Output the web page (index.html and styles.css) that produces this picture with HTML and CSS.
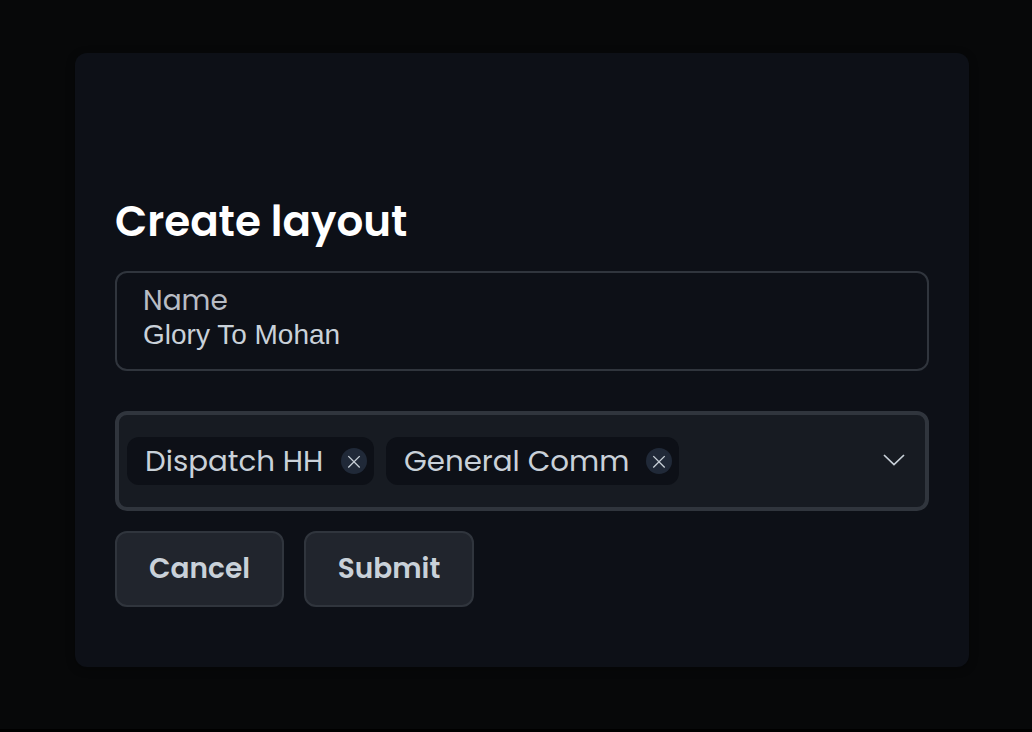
FILE: index.html
```html
<!DOCTYPE html>
<html lang="en">
<head>
<meta charset="utf-8">
<title>Create layout</title>
<link rel="stylesheet" href="styles.css">
</head>
<body>
<main class="card">
  <h1 class="title">Create layout</h1>
  <div class="field">
    <span class="label">Name</span>
    <span class="value">Glory To Mohan</span>
  </div>
  <div class="select">
    <div class="chip"><span class="chip-text">Dispatch HH</span>
      <svg class="remove" viewBox="0 0 26 26"><circle cx="13" cy="13" r="13"/><path d="M7.3 8.1 18.7 19.5M18.7 8.1 7.3 19.5"/></svg></div>
    <div class="chip wide"><span class="chip-text">General Comm</span>
      <svg class="remove" viewBox="0 0 26 26"><circle cx="13" cy="13" r="13"/><path d="M7.3 8.1 18.7 19.5M18.7 8.1 7.3 19.5"/></svg></div>
    <svg class="chevron" viewBox="0 0 24 14"><path d="M2 2 12 11.5 22 2"/></svg>
  </div>
  <div class="actions">
    <button class="button cancel">Cancel</button>
    <button class="button submit">Submit</button>
  </div>
</main>
</body>
</html>
```
FILE: styles.css
```css
* { box-sizing: border-box; }
body {
  margin: 0;
  height: 732px;
  padding: 53px 63px 0 75px;
  overflow: hidden;
  background: #070809;
  border-bottom: 3px solid #000;
  font-family: Poppins, Inter, sans-serif;
  color: #c9d1d9;
}
.card {
  height: 614px;
  padding: 138px 40px 0;
  border-radius: 12px;
  background: #0d1017;
  box-shadow: 0 2px 8px rgba(0, 0, 0, .35);
}
.title {
  margin: 0 0 20px;
  height: 60px;
  font-size: 42px;
  line-height: 62px;
  font-weight: 600;
  color: #fff;
  white-space: nowrap;
}
.field {
  display: flex;
  flex-direction: column;
  height: 100px;
  padding: 11px 26px;
  border: 2px solid #30353d;
  border-radius: 12px;
}
.label {
  align-self: flex-start;
  height: 34px;
  font-size: 28px;
  line-height: 34px;
  color: #b8bcc4;
}
.value {
  font-family: "Liberation Sans", sans-serif;
  font-size: 28px;
  line-height: 34px;
}
.select {
  display: flex;
  align-items: center;
  height: 100px;
  margin-top: 40px;
  padding: 0 19px 0 8px;
  gap: 12px;
  border: 4px solid #30353d;
  border-radius: 12px;
  background: #171b22;
}
.chip {
  display: flex;
  align-items: center;
  justify-content: space-between;
  width: 247px;
  height: 48px;
  padding: 0 7px 0 18px;
  border-radius: 12px;
  background: #0d1017;
}
.chip.wide { width: 293px; }
.chip-text {
  font-size: 29.3px;
  line-height: 48px;
  white-space: nowrap;
}
.remove { width: 26px; height: 26px; }
.remove circle { fill: #202938; }
.remove path { fill: none; stroke: #c9d1d9; stroke-width: 1.3; }
.chevron { width: 24px; height: 14px; margin: 0 0 2px auto; }
.chevron path { fill: none; stroke: #c9d1d9; stroke-width: 1.7; }
.actions {
  display: flex;
  gap: 20px;
  margin-top: 20px;
}
.button {
  width: 169px;
  height: 76px;
  padding: 0;
  border: 2px solid #30353d;
  border-radius: 12px;
  background: #21252d;
  color: #c9d1d9;
  font: 600 28px Poppins, Inter, sans-serif;
}
.button.submit { width: 170px; }
```
